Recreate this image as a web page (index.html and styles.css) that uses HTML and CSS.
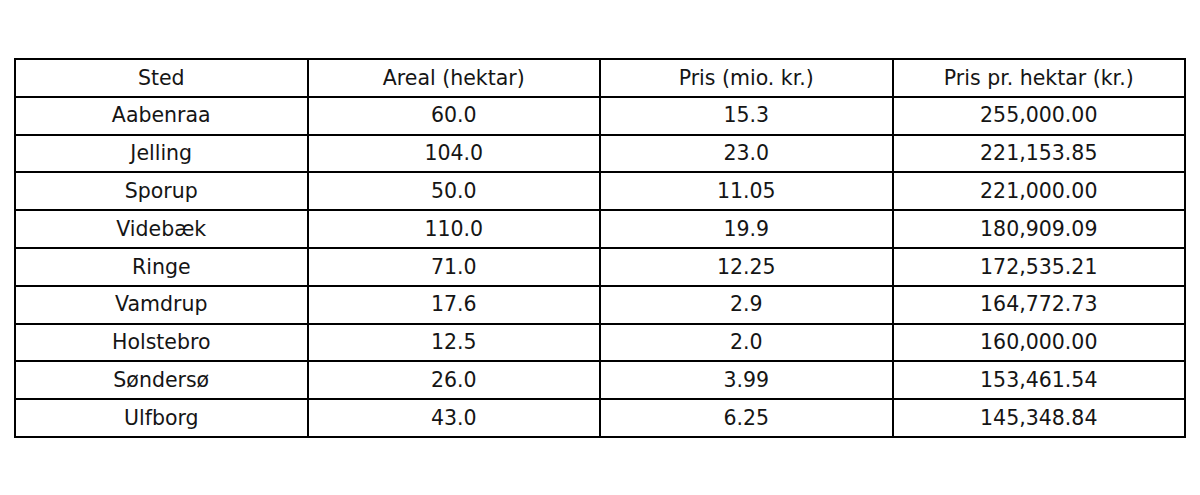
FILE: index.html
```html
<!DOCTYPE html>
<html lang="da">
<head>
<meta charset="utf-8">
<title>Priser</title>
<link rel="stylesheet" href="styles.css">
</head>
<body>
<table class="prices">
<thead>
<tr><th>Sted</th><th>Areal (hektar)</th><th>Pris (mio. kr.)</th><th>Pris pr. hektar (kr.)</th></tr>
</thead>
<tbody>
<tr><td>Aabenraa</td><td>60.0</td><td>15.3</td><td>255,000.00</td></tr>
<tr><td>Jelling</td><td>104.0</td><td>23.0</td><td>221,153.85</td></tr>
<tr><td>Sporup</td><td>50.0</td><td>11.05</td><td>221,000.00</td></tr>
<tr><td>Videbæk</td><td>110.0</td><td>19.9</td><td>180,909.09</td></tr>
<tr><td>Ringe</td><td>71.0</td><td>12.25</td><td>172,535.21</td></tr>
<tr><td>Vamdrup</td><td>17.6</td><td>2.9</td><td>164,772.73</td></tr>
<tr><td>Holstebro</td><td>12.5</td><td>2.0</td><td>160,000.00</td></tr>
<tr><td>Søndersø</td><td>26.0</td><td>3.99</td><td>153,461.54</td></tr>
<tr><td>Ulfborg</td><td>43.0</td><td>6.25</td><td>145,348.84</td></tr>
</tbody>
</table>
</body>
</html>
```
FILE: styles.css
```css
html, body {
  margin: 0;
  padding: 0;
  background: #ffffff;
}
body {
  font-family: "DejaVu Sans", sans-serif;
  font-size: 20.5px;
  color: #151515;
}
.prices {
  border-collapse: collapse;
  margin: 58px 0 0 14px;
  width: 1172px;
  table-layout: fixed;
}
.prices th,
.prices td {
  border: 2px solid #000000;
  height: 37.8px;
  padding: 0;
  text-align: center;
  vertical-align: middle;
  font-weight: normal;
  line-height: 1;
  box-sizing: border-box;
}
```
